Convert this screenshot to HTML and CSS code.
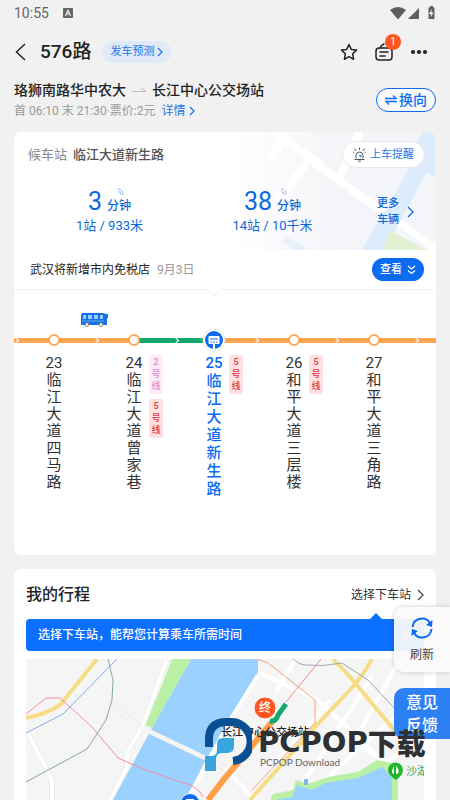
FILE: index.html
```html
<!DOCTYPE html>
<html lang="zh-CN">
<head>
<meta charset="utf-8">
<meta name="viewport" content="width=device-width, initial-scale=1">
<title>576路</title>
<link rel="stylesheet" href="styles.css">
</head>
<body>
<div class="status">
  <span>10:55</span>
  <svg width="10" height="10" viewBox="0 0 10 10"><rect width="10" height="10" rx="1" fill="#666"/><path d="M2.5 8 5 2.2 7.500 8M3.500 6h3" fill="none" stroke="#f1f1f1" stroke-width="1.200"/></svg>
  <svg class="status-right" width="46" height="14" viewBox="0 0 46 14" fill="#5f5f5f"><path d="M0 4Q8-2 16 4L8 13.500Z"/><path d="M29 2v11H18Z"/><path d="M39.500 1.500h1.500V0h3v1.500h1.500V13h-6Z" transform="translate(-1)"/><path d="m42 3-3 5h2.200l-.7 3.500 3-5h-2.200Z" fill="#fff"/></svg>
</div>

<header class="topbar">
  <button class="plain back" aria-label="返回"><svg width="11" height="18" viewBox="0 0 11 18"><path d="M10 1 1.500 9 10 17" fill="none" stroke="#222" stroke-width="1.500"/></svg></button>
  <h1>576路</h1>
  <button class="predict">发车预测<svg width="6" height="10" viewBox="0 0 6 10"><path d="m1 1 4 4-4 4" fill="none" stroke="#2476e8" stroke-width="1.300"/></svg></button>
  <div class="tools">
    <button class="plain" aria-label="收藏"><svg width="18" height="18" viewBox="0 0 18 18"><path d="m9 1.500 2.300 4.900 5.200.7-3.800 3.700.9 5.500L9 13.700l-4.600 2.600.9-5.500L1.500 7.100l5.200-.7Z" fill="none" stroke="#222" stroke-width="1.500" stroke-linejoin="round"/></svg></button>
    <button class="plain notice" aria-label="公告"><svg width="18" height="20" viewBox="0 0 18 20" fill="none" stroke="#222" stroke-width="1.500" stroke-linecap="round"><rect x="1" y="6" width="16" height="12" rx="3"/><path d="M5 6q1-3 4-4M5 10h8M5 14h5"/></svg><span class="count">1</span></button>
    <button class="plain" aria-label="更多"><svg width="18" height="6" viewBox="0 0 18 6" fill="#222"><circle cx="3" cy="3" r="2.100"/><circle cx="9" cy="3" r="2.100"/><circle cx="15" cy="3" r="2.100"/></svg></button>
  </div>
</header>

<section class="route">
  <div>
    <p class="ends">珞狮南路华中农大<svg width="14" height="6" viewBox="0 0 14 6"><path d="M0 4.500h14M9 1.500l5 3" fill="none" stroke="#bbb"/></svg>长江中心公交场站</p>
    <p class="hours">首 06:10 末 21:30·票价:2元 <a href="#detail">详情<svg width="6" height="10" viewBox="0 0 6 10"><path d="m1 1 4 4-4 4" fill="none" stroke="#2476e8" stroke-width="1.300"/></svg></a></p>
  </div>
  <button class="swap"><svg width="12" height="10" viewBox="0 0 12 10"><path d="M0 3.500h11L8 .5M12 6.500H1l3 3" fill="none" stroke="#0b6cf0" stroke-width="1.300"/></svg>换向</button>
</section>

<main>
<section class="card">
  <div class="waiting">
    <svg class="waiting-map" viewBox="0 0 200 118" preserveAspectRatio="xMaxYMin slice" aria-hidden="true">
      <defs><linearGradient id="fade"><stop offset="0" stop-color="#fff"/><stop offset=".5" stop-color="#f5f5f9"/><stop offset="1" stop-color="#f4f5f9"/></linearGradient></defs>
      <path fill="url(#fade)" d="M0 0h200v118H0z"/>
      <path d="m52 0-14 28M75 27l125 88M125 0l-22 50M88 32 40 0M75 27 45 68" fill="none" stroke="#fff" stroke-width="8"/>
      <path d="M188 0h12v45l-9-5-42 78h-23l53-90q-1-18 9-28Z" fill="#dcecfd"/>
      <path d="m155 97 38 21h-46Z" fill="#e0f1d3"/>
      <path d="m52 103 28 15H62L48 108Z" fill="#e6f2fc"/>
    </svg>
    <div class="waiting-head">
      <p><span class="label">候车站</span>临江大道新生路</p>
      <button class="remind"><svg width="13" height="15" viewBox="0 0 13 15" fill="none" stroke="#555"><path d="M3 11.500V8.500a3.500 3.500 0 0 1 7 0v3M1.500 12.500h10M5 14.200h3M6.500 3V.500M3 4 1.500 1.500M10 4l1.500-2.500M1.500 6 .3 5M11.500 6l1.200-1"/><path d="M6 8.500h2v2" stroke="#0b6cf0"/></svg>上车提醒</button>
    </div>
    <div class="arrivals">
      <div class="arrival"><p class="time"><b>3</b><span>分钟</span><svg class="signal" width="7" height="7" viewBox="0 0 7 7"><path d="M1 1q5 0 5 6M1 3.500q3 0 3 3.500" fill="none" stroke="#8dbcf2"/></svg></p><p>1站 / 933米</p></div>
      <div class="arrival"><p class="time"><b>38</b><span>分钟</span><svg class="signal" width="7" height="7" viewBox="0 0 7 7"><path d="M1 1q5 0 5 6M1 3.500q3 0 3 3.500" fill="none" stroke="#8dbcf2"/></svg></p><p>14站 / 10千米</p></div>
      <button class="plain more"><span>更多<br>车辆</span><svg width="7" height="12" viewBox="0 0 7 12"><path d="m1 1 5 5-5 5" fill="none" stroke="#0b6cf0" stroke-width="1.300"/></svg></button>
    </div>
  </div>
  <div class="news">
    <p>武汉将新增市内免税店<time>9月3日</time></p>
    <button class="view">查看<svg width="9" height="10" viewBox="0 0 9 10"><path d="m1 1 3.500 3L8 1M1 5.500l3.500 3 3.500-3" fill="none" stroke="#fff" stroke-width="1.300"/></svg></button>
  </div>
  <div class="line">
    <svg class="notch" width="16" height="9" viewBox="0 0 16 9"><path d="M0 0q3 1 8 8 5-7 8-8" fill="#fff" stroke="#eee"/></svg>
    <svg class="bus" width="27" height="15" viewBox="0 0 27 15"><path d="M2 1h20l3 1h2v4h-1v7H0V3q0-2 2-2Z" fill="#1673e5"/><path d="M2 3h3v4H2zm5 0h4v4H7zm6 0h4v4h-4zm6 0h3v4h-3z" fill="#9bcaff"/><path d="M1 9h22" stroke="#61a7f5"/><g fill="#fff" stroke="#777"><circle cx="6" cy="12.500" r="1.800"/><circle cx="20" cy="12.500" r="1.800"/></g></svg>
    <ol class="stops">
      <li><div class="track"><i class="dot"></i></div><div class="stop"><div class="name">23<span>临江大道四马路</span></div></div></li>
      <li><div class="track to-green"><i class="dot"></i></div><div class="stop"><div class="name">24<span>临江大道曾家巷</span></div><div class="metros"><span class="metro pink">2号线</span><span class="metro">5号线</span></div></div></li>
      <li class="current"><div class="track from-green"><svg class="here" width="24" height="24" viewBox="0 0 24 24"><circle cx="12" cy="12" r="11" fill="#fff" stroke="#e3e6ea"/><circle cx="12" cy="12" r="9" fill="#0b6cf0"/><rect x="6.500" y="8" width="11" height="8" rx="1" fill="#fff"/><path d="M8 11h8M8.500 14h1.500m1 0h2m1 0h1.500" stroke="#0b6cf0"/><path d="M12 16v5" stroke="#fff" stroke-width="2"/></svg></div><div class="stop"><div class="name">25<span>临江大道新生路</span></div><div class="metros"><span class="metro">5号线</span></div></div></li>
      <li><div class="track"><i class="dot"></i></div><div class="stop"><div class="name">26<span>和平大道三层楼</span></div><div class="metros"><span class="metro">5号线</span></div></div></li>
      <li><div class="track"><i class="dot"></i></div><div class="stop"><div class="name">27<span>和平大道三角路</span></div></div></li>
      <li><div class="track"></div></li>
    </ol>
  </div>
</section>

<section class="card trip">
  <div class="trip-head">
    <h2>我的行程</h2>
    <button class="plain choose">选择下车站<svg width="7" height="12" viewBox="0 0 7 12"><path d="m1 1 5 5-5 5" fill="none" stroke="#444" stroke-width="1.300"/></svg></button>
  </div>
  <div class="tip">选择下车站，能帮您计算乘车所需时间<button class="plain close" aria-label="关闭"><svg width="10" height="10" viewBox="0 0 10 10"><path d="m1 1 8 8M9 1 1 9" stroke="#fff"/></svg></button></div>
  <div class="map">
    <svg viewBox="26 659 398 141" preserveAspectRatio="xMinYMin slice" role="img" aria-label="线路地图" fill="none">
      <path fill="#f5f5f5" d="M26 659h398v141H26z"/>
      <path d="M191 659h67v16l-10 15-16 27-29 48-16 35h-74l39-72Z" fill="#9ad1ff"/>
      <path d="M172 659h19l-39 69-7-3 15-35Z" fill="#b9f0a5"/>
      <g stroke="#e6e6e6" stroke-width="5"><path d="m167 659-24 66-16 28v14l-17 33"/><path d="M113 700l4 8 23 19 63 30 22 11"/><path d="m28 733 24 47v20"/></g>
      <g stroke="#fff" stroke-width="4"><path d="m167 659-24 66-16 28v14l-17 33M28 733l24 47v20M258 675l-26 42-45 83"/><path d="m258 672 60 28 67 63M372 677l-80 123M424 690l-110 100M225 768l30 32M296 659l-20 32M330 700l-60 70M345 735l40 28 39-28M400 659l-50 90"/></g>
      <path d="m113 700 4 8 23 19 63 30 22 11" stroke="#f6f6f6" stroke-width="4"/>
      <path d="M271 800q-1-7 8-7l14-3 3-10 12 4 20-7 30-5 19-12 15 3 6 13v24Z" fill="#b9f0a5"/>
      <path d="m275 800 17-3 5-12 15 5 13-7 33-5 24-11 10 10v23Z" fill="#9ad1ff"/>
      <g stroke="#f7dc86" stroke-width="4"><path d="M26 718q18-3 34-13l37-46M372 659q-10 18-22 31l-38 40-62 70M333 659l17 18 50 60"/></g>
      <path d="m26 733 37-19 54-55" stroke="#80aee8"/>
      <path d="m108 659 5 21-1 20-6 20-19 29-61 33" stroke="#86a995"/>
      <path d="m26 714 20-16h14l32 29 26 31q30 14 72 27 9 4 13 12M286 702l35-43" stroke="#f28ca1"/>
      <path d="m257 659 11 4 47 37v23l-63 67" stroke="#f2a27c"/>
      <path d="M293 659q6 6 12 6 18 2 37-2l26 17 30 32" stroke="#9aa9b6"/>
      <path d="m208 800 17-22 47-56" stroke="#ffa049" stroke-width="6"/>
      <path d="M270 721q6 1 8-6l8-11" stroke="#12a870" stroke-width="5"/>
      <circle cx="265" cy="708" r="11" fill="#ff571f" stroke="#fff"/>
      <text class="map-end" x="265" y="712">终</text>
      <text class="map-name" x="265" y="736">长江中心公交场站</text>
      <circle cx="190" cy="803" r="9.500" fill="#0b6cf0" stroke="#fff"/><path d="M186 799h8v4h-8z" fill="#fff"/>
      <path d="M304 779h4v6h-4z" fill="#7db7ee"/>
      <path d="M396 780q-8-5-8-10a7.500 7.500 0 0 1 15 0q0 5-7 10Z" fill="#23b52d"/><path d="M394 766q-4 7 0 8Zm2 0q5 6 1 8h-1Z" fill="#fff"/>
      <text class="map-lake" x="406" y="775">沙湖</text>
    </svg>
  </div>
</section>
</main>

<aside class="floating">
  <button class="refresh"><svg width="22" height="22" viewBox="0 0 22 22"><path d="M1.500 10A9.500 9.500 0 0 1 19 6M20.500 12A9.500 9.500 0 0 1 3 16" fill="none" stroke="#0b6cf0" stroke-width="2"/><path d="m21.500 3-.5 7-6-2ZM.5 19 1 12l6 2Z" fill="#0b6cf0"/></svg>刷新</button>
  <button class="feedback">意见<br>反馈</button>
</aside>

<div class="brand">
  <svg width="48" height="54" viewBox="204 717 48 54"><path d="M209 747v-8q0-17 18-17h2a19.500 19.500 0 0 1 4 39" fill="none" stroke="#084f94" stroke-width="8"/><path d="M205 756h6q6 0 6-6v-6q0-6 6-6h11v8q0 7-7 7h-5q-6 0-6 6v13h-11Z" fill="#38a5df"/></svg>
  <div><p class="brand-name">PCPOP<span>下载</span></p><p class="brand-sub">PCPOP Download</p></div>
</div>
</body>
</html>
```
FILE: styles.css
```css
* { box-sizing: border-box; }
body {
  margin: 0;
  height: 100vh;
  min-height: 800px;
  display: flex;
  flex-direction: column;
  position: relative;
  overflow: hidden;
  background: #f1f1f1;
  color: #222;
  font: 12px/16px Roboto, "Noto Sans CJK SC", sans-serif;
}
h1, h2, p, ol { margin: 0; padding: 0; }
svg { display: block; flex: none; }
button { font: inherit; color: inherit; border: 0; margin: 0; padding: 0; display: flex; align-items: center; white-space: nowrap; }
.plain { background: none; }
a { text-decoration: none; }

.status { display: flex; align-items: center; gap: 14px; height: 26px; padding: 0 14px; color: #666; font-size: 14px; }
.status-right { margin-left: auto; }

.topbar { display: flex; align-items: center; height: 52px; padding: 0 22px 0 15px; }
.topbar h1 { margin: 0 11px 0 14px; font-size: 19px; line-height: 24px; font-weight: 500; }
.predict { height: 22px; gap: 3px; padding: 0 8px; border-radius: 11px; background: #dfe9f7; color: #2476e8; font-size: 11px; }
.tools { display: flex; align-items: center; gap: 17px; margin-left: auto; }
.notice { position: relative; }
.count { position: absolute; left: 10px; top: -8px; width: 16px; height: 16px; border-radius: 8px; background: #ff571f; color: #fff; font-size: 10px; text-align: center; }

.route { display: flex; justify-content: space-between; align-items: center; height: 54px; padding: 0 14px; }
.ends { display: flex; align-items: center; gap: 6px; font-size: 14px; line-height: 22px; font-weight: 500; }
.hours { display: flex; align-items: center; gap: 6px; line-height: 20px; color: #999; margin-bottom: 10px; }
.hours a { display: flex; align-items: center; gap: 3px; color: #2476e8; }
.swap { height: 24px; padding: 0 8px; gap: 2px; border: 1px solid #0b6cf0; border-radius: 12px; background: #f8faff; color: #0b6cf0; font-size: 14px; font-weight: 500; margin-bottom: 10px; }

main { flex: 1; display: flex; flex-direction: column; gap: 14px; padding: 0 14px; min-height: 0; }
.card { background: #fff; border-radius: 7px; overflow: hidden; flex: none; }
.waiting { position: relative; height: 118px; padding: 9px 11px 0 14px; }
.waiting-map { position: absolute; right: 0; top: 0; width: 48%; height: 118px; }
.waiting-head, .arrivals { position: relative; }
.waiting-head { display: flex; justify-content: space-between; align-items: center; font-size: 13px; color: #555; font-weight: 500; }
.waiting-head .label { margin-right: 6px; color: #888; font-weight: 400; }
.remind { height: 27px; gap: 4px; padding: 0 10px; border-radius: 14px; border: 1px solid #e6e8ec; background: #fff; color: #2476e8; font-size: 11px; font-weight: 400; }
.arrivals { display: flex; align-items: center; margin-top: 20px; color: #0969da; }
.arrival { width: 163px; text-align: center; font-size: 13px; line-height: 19px; }
.time { position: relative; display: flex; justify-content: center; align-items: baseline; gap: 5px; height: 28px; line-height: 28px; font-size: 12px; font-weight: 500; }
.time b { font-size: 25px; font-weight: 400; }
.signal { position: absolute; left: 89px; top: 0; }
.more { gap: 8px; margin: 0 11px 0 auto; color: #0969da; font-size: 11px; font-weight: 500; text-align: left; }

.news { display: flex; align-items: center; justify-content: space-between; height: 40px; padding: 0 12px 0 16px; border-bottom: 1px solid #f3f3f3; }
.news time { margin-left: 7px; color: #999; }
.view { height: 23px; gap: 5px; padding: 0 8px; border-radius: 12px; background: #0b6cf0; color: #fff; font-size: 11px; font-weight: 500; }

.line { position: relative; height: 265px; padding-top: 39px; }
.notch { position: absolute; left: 192px; top: -1px; }
.bus { position: absolute; left: 67px; top: 22px; }
.stops { display: flex; list-style: none; }
.stops li { flex: none; width: 80px; }
.track { position: relative; height: 22px; display: flex; align-items: center; justify-content: center; background: linear-gradient(#ffa652, #ffa652) center / 100% 5px no-repeat; }
.track::before { content: ""; position: absolute; left: -1px; top: 9px; width: 4px; height: 4px; border: solid #fff; border-width: 1px 1px 0 0; transform: rotate(45deg); }
.to-green { background-image: linear-gradient(90deg, #ffa652 50%, #12a870 50%); }
.from-green { background-image: linear-gradient(90deg, #12a870 50%, #ffa652 50%); }
.dot { width: 12px; height: 12px; border: 2px solid #ffa652; border-radius: 50%; background: #fff; }
.here { position: relative; }
.stop { display: grid; grid-template-columns: 1fr 18px 1fr; padding-top: 4px; }
.name { grid-column: 2; display: flex; flex-direction: column; align-items: center; font-size: 15px; line-height: 17px; color: #333; }
.name span { width: 15px; word-break: break-all; }
.current .name { color: #0b6cf0; font-weight: 500; }
.current .name span { line-height: 18px; }
.metros { display: flex; flex-direction: column; gap: 5px; padding-left: 6px; }
.metro { width: 14px; height: 39px; padding: 1px 2px; border-radius: 2px; background: #fde0df; color: #e0383e; font-size: 9px; line-height: 12px; font-weight: 500; text-align: center; word-break: break-all; }
.metro.pink { background: #fdebf8; color: #df8cc8; }

.card.trip { flex: 1; display: flex; flex-direction: column; padding: 0 12px; border-radius: 7px 7px 0 0; min-height: 0; }
.trip-head { display: flex; align-items: center; justify-content: space-between; height: 50px; padding-top: 2px; }
.trip-head h2 { font-size: 16px; line-height: 24px; font-weight: 500; }
.choose { gap: 6px; color: #333; }
.tip { position: relative; display: flex; align-items: center; justify-content: space-between; height: 32px; padding: 0 12px; border-radius: 4px; background: #0b70ff; color: #fff; font-weight: 500; }
.tip::before { content: ""; position: absolute; right: 42px; top: -6px; border: 6px solid transparent; border-top: 0; border-bottom-color: #0b70ff; }
.map { flex: 1; margin-top: 8px; min-height: 0; }
.map svg { width: 100%; height: 100%; }
.map text { font-family: "Noto Sans CJK SC", sans-serif; }
.map-end { fill: #fff; font-size: 12px; font-weight: 500; text-anchor: middle; }
.map-name { fill: #222; font-size: 11px; font-weight: 500; text-anchor: middle; }
.map-lake { fill: #35a853; font-size: 11px; }

.floating { position: absolute; right: 0; top: 607px; width: 56px; display: flex; flex-direction: column; gap: 16px; }
.floating button { justify-content: center; }
.refresh { height: 65px; flex-direction: column; gap: 8px; border-radius: 10px 0 0 10px; background: rgba(250, 250, 250, .94); box-shadow: 0 0 5px rgba(0, 0, 0, .2); color: #444; }
.feedback { height: 51px; border-radius: 10px 0 0 10px; background: #2d80f3; color: #fff; font-size: 16px; line-height: 23px; font-weight: 500; }

.brand { position: absolute; left: 204px; top: 717px; display: flex; gap: 6px; pointer-events: none; white-space: nowrap; }
.brand-name { display: flex; margin-top: 12px; color: #2e3033; font: 700 29px/26px "DejaVu Sans", sans-serif; }
.brand-name span { font-family: "Noto Sans CJK SC", sans-serif; font-weight: 900; }
.brand-sub { padding-left: 2px; color: #666; font: 10px/14px Lato, sans-serif; }
```
